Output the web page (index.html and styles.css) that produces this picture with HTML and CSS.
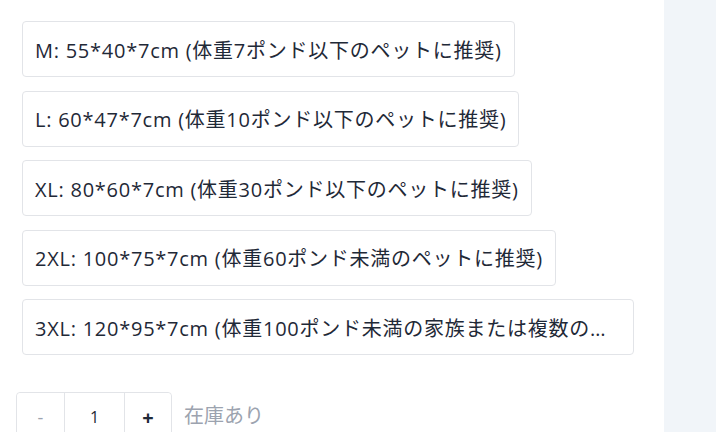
FILE: index.html
```html
<!DOCTYPE html>
<html lang="ja">
<head>
    <meta charset="UTF-8">
    <meta name="viewport" content="width=device-width, initial-scale=1.0">
    <title>サイズ選択</title>
    <link rel="stylesheet" href="styles.css">
</head>
<body>
    <div class="page">
        <div class="product-options">
            <div class="size-list">
                <button class="size-option">M: 55*40*7cm (体重7ポンド以下のペットに推奨)</button>
                <button class="size-option">L: 60*47*7cm (体重10ポンド以下のペットに推奨)</button>
                <button class="size-option">XL: 80*60*7cm (体重30ポンド以下のペットに推奨)</button>
                <button class="size-option">2XL: 100*75*7cm (体重60ポンド未満のペットに推奨)</button>
                <button class="size-option">3XL: 120*95*7cm (体重100ポンド未満の家族または複数のペットに推奨)</button>
            </div>

            <div class="buy-row">
                <div class="qty">
                    <button class="qty-btn minus">-</button>
                    <input class="qty-input" type="text" value="1">
                    <button class="qty-btn plus">+</button>
                </div>
                <span class="stock">在庫あり</span>
            </div>
        </div>
        <div class="side-panel"></div>
    </div>
</body>
</html>
```

FILE: styles.css
```css
body {
    margin: 0;
    font-family: "Open Sans", "Noto Sans CJK JP", sans-serif;
    color: #1f2937;
    background-color: #fff;
    overflow: hidden;
}

.page {
    display: flex;
    height: 432px;
}

.product-options {
    width: 648px;
    padding: 21px 0 0 16px;
}

.side-panel {
    flex: 1;
    background-color: #f1f5f9;
}

.size-list {
    display: flex;
    flex-direction: column;
    align-items: flex-start;
    gap: 13.5px;
    padding-left: 6px;
}

.size-option {
    max-width: 612px;
    height: 56px;
    padding: 0 12px;
    font-family: inherit;
    font-size: 20px;
    letter-spacing: 0.75px;
    color: #1f2937;
    background-color: #fff;
    border: 1px solid #e2e4e8;
    border-radius: 4px;
    white-space: nowrap;
    overflow: hidden;
    text-overflow: ellipsis;
    text-align: left;
    cursor: pointer;
}

.buy-row {
    display: flex;
    align-items: flex-start;
    gap: 12px;
    margin-top: 37px;
}

.qty {
    display: flex;
    border: 1px solid #e2e4e8;
    border-radius: 4px;
    height: 48px;
}

.qty-btn {
    width: 47px;
    border: none;
    background: #fff;
    font-family: inherit;
    font-size: 18px;
    padding: 0;
    border-radius: 4px;
    cursor: pointer;
}

.qty-btn.minus {
    color: #9ca3af;
}

.qty-btn.plus {
    color: #1f2937;
    font-weight: 700;
    font-size: 20px;
    width: 46px;
}

.qty-input {
    width: 59px;
    border: none;
    border-left: 1px solid #e2e4e8;
    border-right: 1px solid #e2e4e8;
    text-align: center;
    font-family: inherit;
    font-size: 16px;
    color: #1f2937;
    padding: 0;
}

.stock {
    font-size: 20px;
    color: #9ca3af;
    line-height: 48px;
}
```
